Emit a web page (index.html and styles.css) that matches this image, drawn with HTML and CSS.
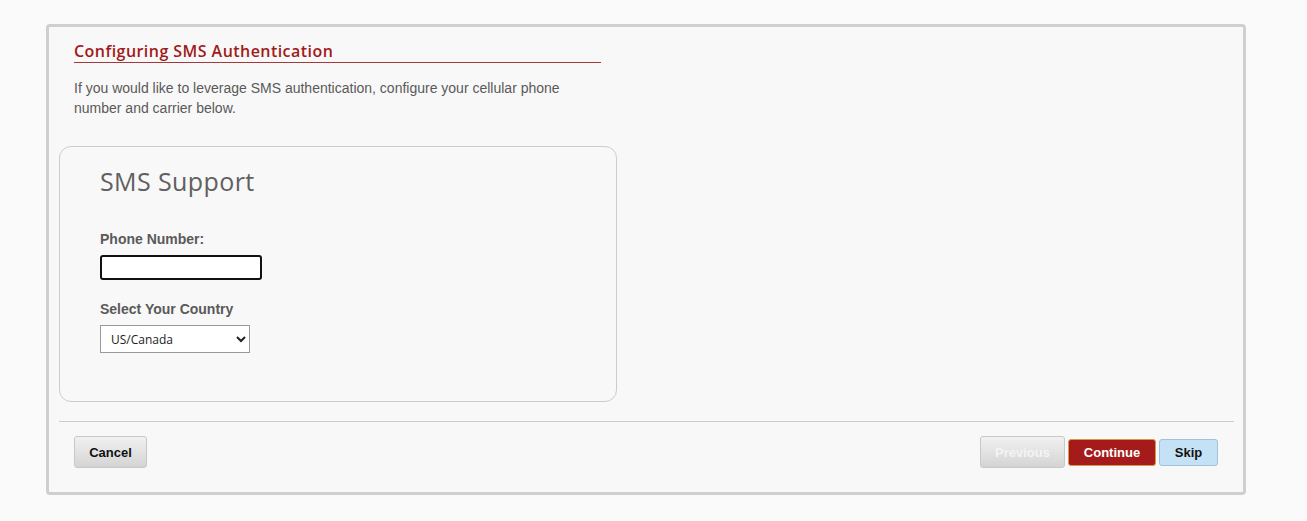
FILE: index.html
```html
<!DOCTYPE html>
<html lang="en">
<head>
  <meta charset="UTF-8" />
  <title>Configuring SMS Authentication</title>
  <link rel="stylesheet" href="styles.css">
</head>
<body>

  <div class="wizard">
    <div class="wizard-body">
      <h1 class="step-title">Configuring SMS Authentication</h1>
      <p class="intro">If you would like to leverage SMS authentication, configure your cellular phone<br>number and carrier below.</p>

      <div class="panel">
        <h2>SMS Support</h2>
        <label class="field-label" for="phone">Phone Number:</label>
        <input type="text" id="phone" class="phone-input" autofocus>
        <label class="field-label" for="country">Select Your Country</label>
        <select id="country" class="country-select">
          <option>US/Canada</option>
        </select>
      </div>
    </div>

    <!-- Footer buttons -->
    <div class="wizard-footer">
      <button class="btn btn-gray btn-cancel">Cancel</button>
      <div class="right-buttons">
        <button class="btn btn-gray btn-disabled">Previous</button>
        <button class="btn btn-red">Continue</button>
        <button class="btn btn-blue">Skip</button>
      </div>
    </div>
  </div>

</body>
</html>
```

FILE: styles.css
```css
* { margin: 0; padding: 0; box-sizing: border-box; }
body {
  background: #fbfafa;
  font-family: "Liberation Sans", Arial, sans-serif;
  padding: 24px 0 0 46px;
}

/* Outer wizard box */
.wizard {
  width: 1200px;
  height: 471px;
  background: #f8f8f8;
  border: 3px solid #cfcfcf;
  border-radius: 4px;
  display: flex;
  flex-direction: column;
}
.wizard-body {
  padding: 14px 0 0 10px;
  flex: 1;
}

.step-title {
  font-family: "Open Sans", sans-serif;
  font-size: 16px;
  font-weight: 600;
  letter-spacing: 0.45px;
  color: #a11a1a;
  width: 527px;
  margin-left: 15px;
  border-bottom: 1px solid #a33a3a;
  line-height: 21px;
}
.intro {
  margin: 15px 0 0 15px;
  font-size: 14px;
  line-height: 20px;
  color: #5a5a5a;
}

/* SMS panel */
.panel {
  margin-top: 28px;
  width: 558px;
  height: 256px;
  border: 1px solid #cccccc;
  border-radius: 12px;
  padding: 17px 40px 0;
  display: flex;
  flex-direction: column;
  align-items: flex-start;
}
.panel h2 {
  font-family: "Open Sans", sans-serif;
  font-size: 25px;
  font-weight: 400;
  letter-spacing: 0.4px;
  color: #606060;
  line-height: 34px;
  margin-bottom: 32px;
}
.field-label {
  font-size: 14px;
  font-weight: bold;
  color: #5a5a5a;
  line-height: 18px;
  margin-bottom: 7px;
}
.phone-input {
  width: 162px;
  height: 25px;
  border: 2px solid #111;
  border-radius: 3px;
  background: #fff;
  margin-bottom: 20px;
  outline: none;
  padding: 0 4px;
  font-size: 13px;
}
.country-select {
  width: 150px;
  height: 28px;
  border: 1px solid #999;
  background: #fff;
  font-family: "Open Sans", sans-serif;
  font-size: 12px;
  color: #222;
  padding: 0 6px;
}

/* Footer */
.wizard-footer {
  margin: 0 9px 0 10px;
  border-top: 1px solid #cccccc;
  padding: 14px 16px 24px 15px;
  display: flex;
  justify-content: space-between;
  align-items: center;
}
.right-buttons {
  display: flex;
  align-items: center;
  gap: 3px;
}
.btn {
  font-family: "Liberation Sans", Arial, sans-serif;
  font-size: 13px;
  font-weight: bold;
  border-radius: 3px;
  cursor: pointer;
}
.btn-gray {
  height: 32px;
  background: linear-gradient(#f1f1f1, #d4d4d4);
  border: 1px solid #c8c8c8;
  color: #111;
}
.btn-cancel { width: 73px; }
.btn-disabled {
  color: #f4f4f4;
  width: 85px;
}
.btn-red {
  height: 27px;
  width: 88px;
  background: #a51b1b;
  border: 1px solid #d59a4a;
  color: #fff;
}
.btn-blue {
  height: 27px;
  width: 59px;
  background: #c5e1f5;
  border: 1px solid #9ec3dd;
  color: #111;
}
```
